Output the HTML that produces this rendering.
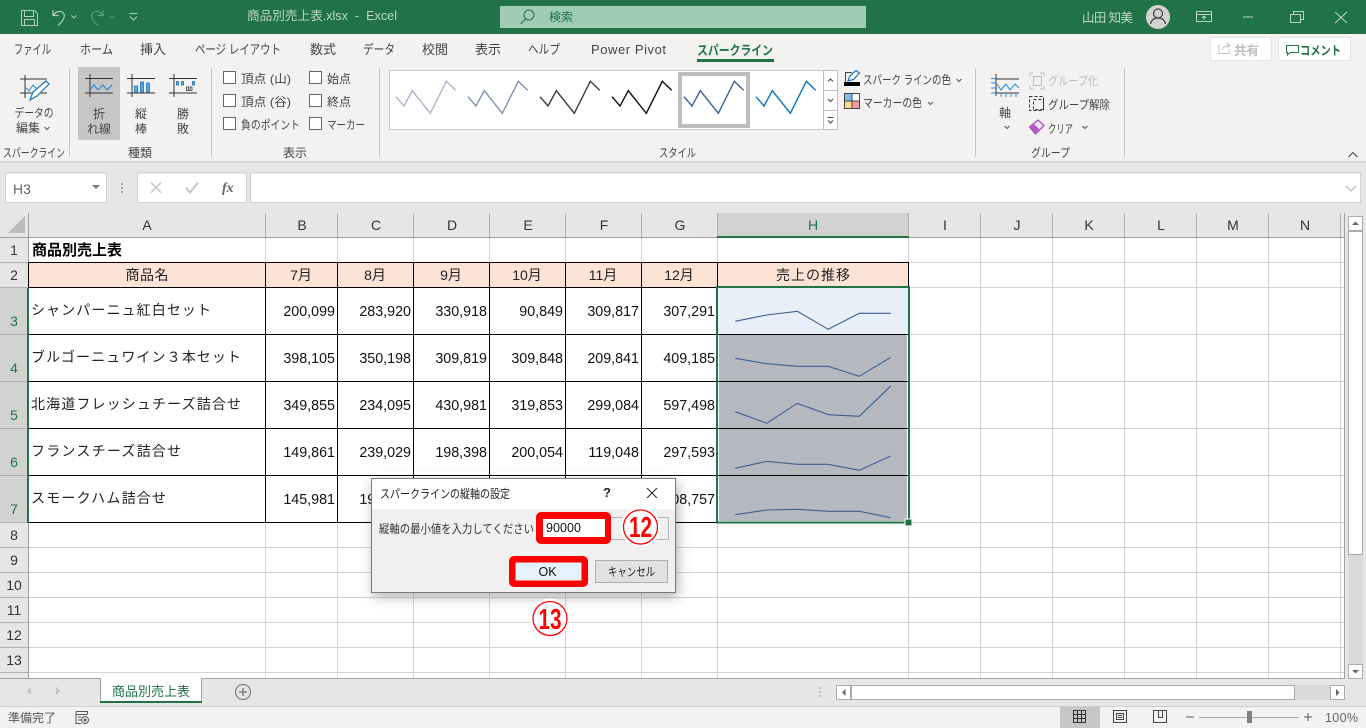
<!DOCTYPE html>
<html lang="ja"><head><meta charset="utf-8"><title>商品別売上表.xlsx - Excel</title>
<style>
html,body{margin:0;padding:0;background:#e6e6e6;overflow:hidden}
svg{display:block;font-family:"Liberation Sans","Noto Sans CJK JP",sans-serif}
.r{font-size:12px;fill:#444}
.c{font-size:14px;fill:#111}
.n{font-size:14.3px;fill:#111;text-anchor:end}
.h{font-size:14px;fill:#333;text-anchor:middle}
.hs{font-size:14px;fill:#217346;text-anchor:middle}
.m{text-anchor:middle}
</style></head><body>
<svg xmlns="http://www.w3.org/2000/svg" width="1366" height="728" viewBox="0 0 1366 728">
<!-- base -->
<rect width="1366" height="728" fill="#e6e6e6"/>
<!-- title bar -->
<rect width="1366" height="34" fill="#217346"/>
<g fill="none" stroke="#b3cfc0" stroke-width="1">
<path d="M21.5 10.5H34L37.5 13.5V25.5H21.5Z"/><path d="M24.5 10.5V16.5H33.5V10.5M24.5 25.5V19.5H34.5V25.5"/>
<path d="M53 10V15.5H58.5M53.5 15C56 11 62 10 64 14C65.5 18 62 22 58 25.5" stroke-width="1.2"/>
<path d="M71.5 15.5L74 18L76.5 15.5"/>
</g>
<g fill="none" stroke="#5d9a7b" stroke-width="1"><path d="M103 10V15.5H97.5M102.5 15C100 11 94 10 92 14C90.5 18 94 22 98 25.5" stroke-width="1.2"/><path d="M109.5 15.5L112 18L114.500 15.5"/></g>
<g fill="none" stroke="#b3cfc0"><path d="M129.5 13.5H137.5M130 16.5L133.5 20L137 16.5"/></g>
<text x="247" y="20" font-size="12.5" fill="#bcd5c8" textLength="150" lengthAdjust="spacingAndGlyphs">商品別売上表.xlsx&#160;&#160;-&#160;&#160;Excel</text>
<rect x="500" y="6" width="366" height="22" fill="#a0ccb3"/>
<g fill="none" stroke="#217346" stroke-width="1"><circle cx="529" cy="15" r="5"/><path d="M525.5 19L520.5 24"/></g>
<text x="549" y="21" font-size="12" fill="#217346">検索</text>
<text x="1082" y="22" font-size="12.5" fill="#bcd5c8" textLength="51" lengthAdjust="spacing">山田 知美</text>
<circle cx="1158" cy="17" r="12" fill="#d2d2d2"/>
<g fill="none" stroke="#444" stroke-width="1.2"><circle cx="1158" cy="13.5" r="4.5"/><path d="M1150.5 24C1151.5 19.5 1154.5 18 1158 18C1161.5 18 1164.5 19.5 1165.5 24"/></g>
<g fill="none" stroke="#b9d4c6" stroke-width="1">
<path d="M1196.5 11.5H1211.5V21.5H1196.5ZM1196.5 14.5H1211.5M1204 20V16M1202 18L1204 16L1206 18"/>
<path d="M1243 17H1253"/>
<path d="M1290.5 14.5H1300.5V22.5H1290.5ZM1293.5 14V11.5H1303.5V19.5H1301"/>
<path d="M1335 12L1347 23M1347 12L1335 23" stroke-width="1.1"/>
</g>
<!-- ribbon -->
<rect y="34" width="1366" height="127" fill="#f3f2f1"/>
<rect y="161" width="1366" height="1" fill="#d3d2d1"/><rect y="162" width="1366" height="1" fill="#dcdcdc"/><rect y="163" width="1366" height="1" fill="#e2e2e2"/>
<g font-size="13" fill="#444">
<text x="14" y="54" textLength="37" lengthAdjust="spacingAndGlyphs">ファイル</text>
<text x="80" y="54" textLength="33" lengthAdjust="spacingAndGlyphs">ホーム</text>
<text x="140" y="54" textLength="26" lengthAdjust="spacingAndGlyphs">挿入</text>
<text x="195" y="54" textLength="86" lengthAdjust="spacingAndGlyphs">ページ レイアウト</text>
<text x="310" y="54" textLength="26" lengthAdjust="spacingAndGlyphs">数式</text>
<text x="363" y="54" textLength="32" lengthAdjust="spacingAndGlyphs">データ</text>
<text x="422" y="54" textLength="26" lengthAdjust="spacingAndGlyphs">校閲</text>
<text x="475" y="54" textLength="26" lengthAdjust="spacingAndGlyphs">表示</text>
<text x="528" y="54" textLength="32" lengthAdjust="spacingAndGlyphs">ヘルプ</text>
<text x="591" y="54" textLength="75" lengthAdjust="spacing">Power Pivot</text>
<text x="697" y="55" textLength="76" lengthAdjust="spacingAndGlyphs" font-weight="700" fill="#217346">スパークライン</text>
</g>
<rect x="697" y="59" width="77" height="3" fill="#217346"/>
<!-- share buttons -->
<rect x="1210.5" y="37.5" width="61" height="23" fill="#fff" stroke="#e4e4e4"/>
<path d="M1219 44.5V53.5H1229V49M1222 50C1223 46.5 1226 45.5 1229 45.5M1226.5 43L1230 45.5L1226.500 48" fill="none" stroke="#c4c4c4"/>
<text x="1234" y="55" font-size="12.5" font-weight="700" fill="#bdbdbd">共有</text>
<rect x="1278.5" y="37.5" width="72" height="23" fill="#fff" stroke="#e4e4e4"/>
<path d="M1286.5 45.5H1298.5V52.5H1290L1287.5 55V52.500H1286.5Z" fill="none" stroke="#217346"/>
<text x="1300" y="55" font-size="12.5" font-weight="700" fill="#217346" textLength="41" lengthAdjust="spacingAndGlyphs">コメント</text>
<!-- group separators -->
<g fill="#c8c6c4"><rect x="69" y="68" width="1" height="89"/><rect x="211" y="68" width="1" height="89"/><rect x="379" y="68" width="1" height="89"/><rect x="975" y="68" width="1" height="89"/><rect x="1124" y="68" width="1" height="89"/></g>
<!-- edit data -->
<path d="M25 75V98M20 79H47M20 93H47" fill="none" stroke="#333"/>
<path d="M25 87L29 91L33 85L37 89" fill="none" stroke="#2b88d8"/>
<path d="M30 100L33 92L46 81L49 84L37 96Z" fill="#fff" stroke="#1a73c4" stroke-width="1.2"/>
<text class="r m" x="34" y="117" textLength="39" lengthAdjust="spacingAndGlyphs">データの</text>
<text class="r" x="16" y="132">編集</text><path d="M44.5 127L47 129.5L49.5 127" fill="none" stroke="#555"/>
<!-- type buttons -->
<rect x="78" y="67" width="42" height="73" fill="#c8c6c4"/>
<g fill="none" stroke="#333"><path d="M90 74V97M85 78.5H113M85 93H113M132 74V97M127 78.5H155M127 93H155M174 74V97M169 78.5H197M169 93H197"/></g>
<path d="M90 90L94 85L98 90L103 85L107 90L112 85" fill="none" stroke="#2b88d8" stroke-width="1.2"/>
<g fill="#5ba7de" stroke="#1a73c4" stroke-width=".8"><rect x="134.5" y="86" width="3" height="6"/><rect x="140.5" y="82" width="3" height="10"/><rect x="146.5" y="83" width="3" height="9"/></g>
<g fill="#5ba7de" stroke="#1a73c4" stroke-width=".8"><rect x="176.5" y="81.5" width="2" height="3.5"/><rect x="181.5" y="81.5" width="2" height="3.5"/><rect x="192.5" y="81.5" width="2" height="3.5"/></g>
<g fill="none" stroke="#333" stroke-width=".8"><rect x="186.5" y="87" width="2" height="3.5"/><rect x="190" y="87" width="2" height="3.5"/></g>
<g font-size="12" fill="#444" text-anchor="middle">
<text x="99" y="118">折</text><text x="99" y="133">れ線</text>
<text x="141" y="118">縦</text><text x="141" y="133">棒</text>
<text x="183" y="118">勝</text><text x="183" y="133">敗</text>
</g>
<!-- checkboxes -->
<g fill="#fff" stroke="#666"><rect x="223.5" y="71.5" width="12" height="12"/><rect x="223.5" y="94.5" width="12" height="12"/><rect x="223.5" y="117.5" width="12" height="12"/><rect x="309.5" y="71.5" width="12" height="12"/><rect x="309.5" y="94.5" width="12" height="12"/><rect x="309.5" y="117.5" width="12" height="12"/></g>
<text class="r" x="241" y="83" textLength="50" lengthAdjust="spacingAndGlyphs">頂点 (山)</text>
<text class="r" x="241" y="106" textLength="50" lengthAdjust="spacingAndGlyphs">頂点 (谷)</text>
<text class="r" x="241" y="129" textLength="59" lengthAdjust="spacingAndGlyphs">負のポイント</text>
<text class="r" x="327" y="83" textLength="24" lengthAdjust="spacingAndGlyphs">始点</text>
<text class="r" x="327" y="106" textLength="24" lengthAdjust="spacingAndGlyphs">終点</text>
<text class="r" x="327" y="129" textLength="38" lengthAdjust="spacingAndGlyphs">マーカー</text>
<!-- gallery -->
<rect x="389.5" y="70.5" width="434" height="59" fill="#fff" stroke="#c8c8c8"/>
<rect x="680" y="74" width="68" height="52" fill="#fff" stroke="#bdbdbd" stroke-width="4"/>
<g fill="none" stroke-width="1.4">
<path stroke="#abb8cb" d="M396 96.7L404 106L412.3 90.7L430.3 113.3L446.3 81.3L455.7 90.3"/>
<path stroke="#7f93b2" d="M468 96.7L476 106L484.3 90.7L502.3 113.3L518.3 81.3L527.7 90.3"/>
<path stroke="#3c3c3c" d="M540 96.7L548 106L556.3 90.7L574.3 113.3L590.3 81.3L599.7 90.3"/>
<path stroke="#111" d="M612 96.7L620 106L628.3 90.7L646.3 113.3L662.3 81.3L671.7 90.3"/>
<path stroke="#3a6296" d="M684 96.7L692 106L700.3 90.7L718.3 113.3L734.3 81.3L743.7 90.3"/>
<path stroke="#0a75c2" d="M756 96.7L764 106L772.3 90.7L790.3 113.3L806.3 81.3L815.7 90.3"/>
</g>
<g fill="#fff" stroke="#bdbdbd"><rect x="823.5" y="70.5" width="14" height="20"/><rect x="823.5" y="90.5" width="14" height="20"/><rect x="823.5" y="110.5" width="14" height="19"/></g>
<g fill="none" stroke="#444"><path d="M828 81.5L830.5 79L833 81.5M828 99L830.5 101.5L833 99M827.5 117.5H833.5M828 120.5L830.5 123L833 120.5"/></g>
<!-- sparkline colors -->
<path d="M845.5 83V72.5H852" fill="none" stroke="#444"/>
<path d="M848 81L850 76L856 70.5L859.5 73L853.5 79.5Z" fill="#fff" stroke="#1a73c4" stroke-width="1.2"/>
<rect x="844" y="82" width="16" height="4" fill="#000"/>
<rect x="844.5" y="93.5" width="15" height="15" fill="#fff" stroke="#444"/>
<rect x="845" y="94" width="7" height="7" fill="#7dbce8"/><rect x="845" y="101.5" width="7" height="6.5" fill="#fcd98a"/><rect x="852.5" y="101.5" width="6.5" height="6.5" fill="#fb9aa0"/>
<path d="M844.5 101H859.5M852 93.5V108.5" stroke="#444"/>
<text class="r" x="863" y="84" textLength="88" lengthAdjust="spacingAndGlyphs">スパーク ラインの色</text>
<path d="M956.5 79L959 81.5L961.5 79" fill="none" stroke="#555"/>
<text class="r" x="863" y="107" textLength="59" lengthAdjust="spacingAndGlyphs">マーカーの色</text>
<path d="M928 102L930.5 104.5L933 102" fill="none" stroke="#555"/>
<!-- axis -->
<path d="M996 74V96M996 79H1019M996 93H1019" fill="none" stroke="#333"/>
<path d="M991 78.5H996M991 83H996M991 88H996M991 93H996M1001 93V97M1006 93V97M1011 93V97M1016 93V97" stroke="#2b88d8" fill="none"/>
<path d="M997 84L1001 90L1006 84L1010 90L1015 84L1019 88" fill="none" stroke="#2b88d8"/>
<text class="r m" x="1005" y="117">軸</text>
<path d="M1004.5 126L1007 128.5L1009.5 126" fill="none" stroke="#555"/>
<g fill="none" stroke="#bbb"><path d="M1030 73H1033M1030 73V76M1040 73H1044M1044 73V76M1030 86V89H1033M1044 86V89H1040"/><rect x="1033.5" y="76.5" width="8" height="9"/></g>
<text x="1048" y="85" font-size="12" fill="#bbb" textLength="50" lengthAdjust="spacingAndGlyphs">グループ化</text>
<g fill="none" stroke="#333" stroke-dasharray="3 2"><rect x="1029.5" y="96.5" width="14" height="14"/></g>
<g fill="none" stroke="#333" stroke-dasharray="3 2"><rect x="1033.5" y="99.5" width="10" height="10"/></g>
<text class="r" x="1048" y="109" textLength="62" lengthAdjust="spacingAndGlyphs">グループ解除</text>
<path d="M1029.5 127L1038 120L1044 125.500L1035.500 134Z" fill="#f1e4f4" stroke="#a448b3" stroke-width="1.2"/>
<path d="M1029.5 127L1033.500 123.500L1039.500 129.500L1035.500 134Z" fill="#b45cc2"/>
<text class="r" x="1048" y="133" textLength="25" lengthAdjust="spacingAndGlyphs">クリア</text>
<path d="M1082.5 126L1085 128.5L1087.5 126" fill="none" stroke="#555"/>
<!-- group labels -->
<text class="r" x="3" y="157" textLength="62" lengthAdjust="spacingAndGlyphs">スパークライン</text>
<text class="r" x="128" y="157" textLength="24" lengthAdjust="spacingAndGlyphs">種類</text>
<text class="r" x="283" y="157" textLength="24" lengthAdjust="spacingAndGlyphs">表示</text>
<text class="r" x="659" y="157" textLength="37" lengthAdjust="spacingAndGlyphs">スタイル</text>
<text class="r" x="1031" y="157" textLength="39" lengthAdjust="spacingAndGlyphs">グループ</text>
<path d="M1348.5 157L1353 152.5L1357.5 157" fill="none" stroke="#444" stroke-width="1.1"/>
<!-- formula bar -->
<rect x="5.5" y="173" width="101" height="29.5" fill="#fff" stroke="#d0d0d0"/>
<text x="13" y="194" font-size="14" fill="#666">H3</text>
<path d="M92 185H100L96 189Z" fill="#777"/>
<path d="M122 183V185M122 187V189M122 191V193" stroke="#aaa" stroke-width="2"/>
<rect x="137.5" y="173" width="109" height="29.5" fill="#fff" stroke="#d0d0d0"/>
<path d="M151 182.5L161 192.5M161 182.5L151 192.5" stroke="#c4c4c4" stroke-width="1.5"/>
<path d="M186 188L190 192.5L198 182.5" stroke="#c4c4c4" stroke-width="2" fill="none"/>
<text x="222" y="192" font-size="14" font-style="italic" font-weight="700" font-family="Liberation Serif,serif" fill="#666">fx</text>
<rect x="250.5" y="173" width="1110" height="29.5" fill="#fff" stroke="#d0d0d0"/>
<path d="M1346 186L1351 191L1356 186" stroke="#aaa" fill="none"/>
<!-- sheet -->
<rect x="29" y="238" width="1315" height="440" fill="#fff"/>
<!-- headers -->
<rect x="0" y="213" width="1344" height="24" fill="#e6e6e6"/>
<rect x="0" y="237" width="28" height="441" fill="#e6e6e6"/>
<rect x="718" y="213" width="190" height="24" fill="#d2d2d2"/>
<rect x="0" y="288" width="28" height="234" fill="#d2d2d2"/>
<path d="M25 216V233H8Z" fill="#bbb"/>
<g stroke="#b1b1b1"><path d="M28.5 213V237M265.5 213V237M337.5 213V237M413.5 213V237M489.5 213V237M565.5 213V237M641.5 213V237M717.5 213V237M908.5 213V237M980.5 213V237M1052.5 213V237M1124.5 213V237M1196.5 213V237M1268.5 213V237M1340.5 213V237"/>
<path d="M0 262.5H28M0 287.5H28M0 334.5H28M0 381.5H28M0 428.5H28M0 475.5H28M0 522.5H28M0 547.5H28M0 572.5H28M0 597.5H28M0 622.5H28M0 647.5H28M0 672.5H28"/></g>
<rect x="0" y="237" width="1344" height="1" fill="#a0a0a0"/>
<rect x="28" y="213" width="1" height="465" fill="#a0a0a0"/>
<rect x="717" y="236" width="192" height="2" fill="#217346"/>
<rect x="1344" y="213" width="1" height="465" fill="#a0a0a0"/>
<!-- gridlines -->
<g stroke="#d4d4d4"><path d="M265.5 238V678M337.5 238V678M413.5 238V678M489.5 238V678M565.5 238V678M641.5 238V678M717.5 238V678M908.5 238V678M980.5 238V678M1052.5 238V678M1124.5 238V678M1196.5 238V678M1268.5 238V678M1340.5 238V678"/>
<path d="M29 262.5H1344M29 287.5H1344M908 334.5H1344M908 381.5H1344M908 428.5H1344M908 475.5H1344M908 522.5H1344M29 547.5H1344M29 572.5H1344M29 597.5H1344M29 622.5H1344M29 647.5H1344M29 672.5H1344"/></g>
<rect x="29" y="263" width="880" height="24" fill="#fde3d6"/>
<!-- sparkline cells -->
<rect x="718" y="288" width="190" height="46" fill="#e8eff9"/>
<rect x="718" y="335" width="191" height="187" fill="#fff"/>
<rect x="719" y="335" width="188" height="186" fill="#b5b9bf"/>
<!-- table borders -->
<g stroke="#000"><path d="M29 262.5H909M29 287.5H909M29 334.5H909M29 381.5H909M29 428.5H909M29 475.5H909M29 522.5H909"/>
<path d="M265.5 262V523M337.5 262V523M413.5 262V523M489.5 262V523M565.5 262V523M641.5 262V523M717.5 262V523M908.5 262V523M28.5 262V288"/></g>
<!-- sparklines -->
<g fill="none" stroke="#3a5f91" stroke-width="1.1">
<path d="M735.3 321.3L766.7 315L797.3 311.3L828.3 329.3L859.3 313.3L890.7 313.3"/>
<path d="M735.3 358.3L766.7 363.7L797.3 366.3L828.3 366.3L859.3 376.3L890.7 357.3"/>
<path d="M735.3 411.7L766.7 423.3L797.3 403.3L828.3 414.7L859.3 416.3L890.7 386"/>
<path d="M735.3 468.3L766.7 461.3L797.3 464.3L828.3 464.3L859.3 470.3L890.7 456"/>
<path d="M735.3 514.7L766.7 510L797.3 509.3L828.3 511.3L859.3 511.3L890.7 517.7"/>
</g>
<!-- selection -->
<rect x="717" y="287" width="192" height="235.5" fill="none" stroke="#217346" stroke-width="2"/>
<rect x="27" y="288" width="2" height="235" fill="#217346"/>
<rect x="905" y="519" width="7" height="7" fill="#217346" stroke="#fff"/>
<!-- header text -->
<text class="h" x="147" y="230">A</text><text class="h" x="302" y="230">B</text><text class="h" x="376" y="230">C</text><text class="h" x="452" y="230">D</text><text class="h" x="528" y="230">E</text><text class="h" x="604" y="230">F</text><text class="h" x="680" y="230">G</text><text class="hs" x="813" y="230">H</text><text class="h" x="945" y="230">I</text><text class="h" x="1017" y="230">J</text><text class="h" x="1089" y="230">K</text><text class="h" x="1161" y="230">L</text><text class="h" x="1233" y="230">M</text><text class="h" x="1305" y="230">N</text>
<text class="h" x="14" y="255">1</text><text class="h" x="14" y="280">2</text><text class="hs" x="14" y="326">3</text><text class="hs" x="14" y="373">4</text><text class="hs" x="14" y="420">5</text><text class="hs" x="14" y="467">6</text><text class="hs" x="14" y="514">7</text><text class="h" x="14" y="540">8</text><text class="h" x="14" y="565">9</text><text class="h" x="14" y="590">10</text><text class="h" x="14" y="615">11</text><text class="h" x="14" y="640">12</text><text class="h" x="14" y="665">13</text>
<!-- cell text -->
<text x="32" y="255" font-size="15" font-weight="700" fill="#000" textLength="90" lengthAdjust="spacingAndGlyphs">商品別売上表</text>
<g text-anchor="middle" font-size="14" fill="#222">
<text x="147" y="280" textLength="43">商品名</text><text x="301" y="280">7月</text><text x="375" y="280">8月</text><text x="451" y="280">9月</text><text x="527" y="280">10月</text><text x="603" y="280">11月</text><text x="679" y="280">12月</text><text x="813" y="280" textLength="74">売上の推移</text>
</g>
<g font-size="14" fill="#222">
<text x="31" y="315" textLength="180" lengthAdjust="spacing">シャンパーニュ紅白セット</text>
<text x="31" y="362" textLength="210" lengthAdjust="spacing">ブルゴーニュワイン３本セット</text>
<text x="31" y="409" textLength="210" lengthAdjust="spacing">北海道フレッシュチーズ詰合せ</text>
<text x="31" y="456" textLength="150" lengthAdjust="spacing">フランスチーズ詰合せ</text>
<text x="31" y="503" textLength="135" lengthAdjust="spacing">スモークハム詰合せ</text>
</g>
<g>
<text class="n" x="335" y="316">200,099</text><text class="n" x="411" y="316">283,920</text><text class="n" x="487" y="316">330,918</text><text class="n" x="563" y="316">90,849</text><text class="n" x="639" y="316">309,817</text><text class="n" x="715" y="316">307,291</text>
<text class="n" x="335" y="363">398,105</text><text class="n" x="411" y="363">350,198</text><text class="n" x="487" y="363">309,819</text><text class="n" x="563" y="363">309,848</text><text class="n" x="639" y="363">209,841</text><text class="n" x="715" y="363">409,185</text>
<text class="n" x="335" y="410">349,855</text><text class="n" x="411" y="410">234,095</text><text class="n" x="487" y="410">430,981</text><text class="n" x="563" y="410">319,853</text><text class="n" x="639" y="410">299,084</text><text class="n" x="715" y="410">597,498</text>
<text class="n" x="335" y="457">149,861</text><text class="n" x="411" y="457">239,029</text><text class="n" x="487" y="457">198,398</text><text class="n" x="563" y="457">200,054</text><text class="n" x="639" y="457">119,048</text><text class="n" x="715" y="457">297,593</text>
<text class="n" x="335" y="504">145,981</text><text class="n" x="411" y="504">198,309</text><text class="n" x="715" y="504">308,757</text>
</g>
<!-- vertical scrollbar -->
<rect x="1345" y="213" width="21" height="493" fill="#e6e6e6"/>
<rect x="1348" y="232" width="15" height="432" fill="#dadada"/>
<rect x="1348.5" y="216.5" width="14" height="14" fill="#fff" stroke="#ababab"/>
<path d="M1352 225L1355.5 221.5L1359 225Z" fill="#666"/>
<rect x="1348.5" y="231.5" width="14" height="323" fill="#fff" stroke="#ababab"/>
<rect x="1348.5" y="664.5" width="14" height="14" fill="#fff" stroke="#ababab"/>
<path d="M1352 670H1359L1355.5 673.5Z" fill="#666"/>
<!-- tab bar -->
<rect x="0" y="678" width="1345" height="28" fill="#e6e6e6"/>
<rect x="0" y="678" width="1345" height="1" fill="#a0a0a0"/>
<path d="M31 686.5V695.5L27 691ZM56 686.5V695.5L60 691Z" fill="#c6c6c6"/>
<rect x="100" y="678" width="101" height="25" fill="#fff"/>
<path d="M100.5 678V702M201.5 678V702" stroke="#a0a0a0"/>
<rect x="100" y="701" width="102" height="2" fill="#217346"/>
<text x="112" y="696" font-size="13" fill="#217346" textLength="78" lengthAdjust="spacing">商品別売上表</text>
<circle cx="243" cy="692" r="7.5" fill="none" stroke="#808080" stroke-width="1.2"/>
<path d="M239 692H247M243 688V696" stroke="#808080" stroke-width="1.6"/>
<path d="M820 687V689M820 691V693M820 695V697" stroke="#999"/>
<!-- horizontal scrollbar -->
<rect x="836" y="685" width="495" height="15" fill="#dadada"/>
<rect x="836.5" y="685.5" width="14" height="14" fill="#fff" stroke="#ababab"/>
<path d="M845.5 689V696L842 692.5Z" fill="#666"/>
<rect x="851.5" y="685.5" width="443" height="14" fill="#fff" stroke="#ababab"/>
<rect x="1330.5" y="685.5" width="14" height="14" fill="#fff" stroke="#ababab"/>
<path d="M1336 689V696L1339.5 692.5Z" fill="#666"/>
<!-- status bar -->
<rect y="706" width="1366" height="22" fill="#f3f2f1"/>
<rect y="706" width="1366" height="1" fill="#cfcfcf"/>
<text x="8" y="722" font-size="12" fill="#555" textLength="48">準備完了</text>
<path d="M76 711.5H87.5V714M76 711.5V723.5H81M76 714.5H87.5M78 717H81M78 720H81" fill="none" stroke="#555"/>
<circle cx="85" cy="720" r="3.5" fill="none" stroke="#555"/><circle cx="85" cy="720" r="1.5" fill="#555"/>
<rect x="1060" y="707" width="40" height="21" fill="#c6c6c6"/>
<path d="M1073.5 710.5H1085.5V722.5H1073.5ZM1073.5 714.5H1085.5M1073.5 718.5H1085.5M1077.5 710.5V722.5M1081.5 710.5V722.5" fill="none" stroke="#333"/>
<path d="M1113.5 710.5H1126.5V722.5H1113.5ZM1116.5 713.5H1123.5V719.5H1116.5ZM1118 715.5H1122M1118 717.5H1122" fill="none" stroke="#444"/>
<path d="M1153.5 710.5H1166.5V722.5H1153.5ZM1158.5 710.5V717.5H1162.5V710.5" fill="none" stroke="#444"/>
<path d="M1186 717H1194M1304 717H1312M1308 713V721" stroke="#555" fill="none"/>
<rect x="1199" y="717" width="100" height="1" fill="#aaa"/>
<rect x="1247" y="711" width="5" height="12" fill="#808080"/>
<text x="1325" y="722" font-size="12.5" fill="#666" textLength="33">100%</text>
<!-- dialog -->
<defs><filter id="sh" x="-10%" y="-15%" width="120%" height="135%"><feDropShadow dx="2" dy="4" stdDeviation="6" flood-color="#000" flood-opacity=".3"/></filter></defs>
<rect x="371.5" y="478.5" width="304" height="114" fill="#f0f0f0" stroke="#7a7a7a" filter="url(#sh)"/>
<rect x="372" y="479" width="303" height="30" fill="#fff"/>
<text x="380" y="498" font-size="12" fill="#222" textLength="130" lengthAdjust="spacingAndGlyphs">スパークラインの縦軸の設定</text>
<text x="607" y="497" font-size="13" font-weight="700" fill="#222" text-anchor="middle">?</text>
<path d="M647 488L657 498M657 488L647 498" stroke="#222" fill="none"/>
<text x="379" y="533" font-size="12" fill="#333" textLength="155" lengthAdjust="spacingAndGlyphs">縦軸の最小値を入力してください</text>
<rect x="610" y="517.5" width="58.5" height="22" fill="#f0f0f0" stroke="#b5b5b5"/>
<rect x="536" y="512" width="75" height="32" rx="5" fill="#f00"/>
<rect x="543" y="519" width="62" height="18" fill="#fff"/>
<text x="546" y="532" font-size="12.5" fill="#111" textLength="35">90000</text>
<circle cx="640.5" cy="527" r="20" fill="#fff"/>
<circle cx="640.5" cy="527" r="17" fill="#fff" stroke="#f00" stroke-width="1.3"/>
<text x="640.5" y="537" font-size="29" font-weight="700" fill="#f00" text-anchor="middle" textLength="23" lengthAdjust="spacingAndGlyphs">12</text>
<rect x="509" y="556" width="79" height="31" rx="5" fill="#f00"/>
<rect x="515.5" y="562.5" width="66" height="18" fill="#e5f1fb"/>
<text x="547.5" y="576" font-size="12.5" fill="#111" text-anchor="middle">OK</text>
<rect x="595.5" y="560.5" width="72" height="22" fill="#e1e1e1" stroke="#adadad"/>
<text x="631.5" y="576" font-size="12" fill="#222" text-anchor="middle" textLength="47" lengthAdjust="spacingAndGlyphs">キャンセル</text>
<circle cx="550" cy="618.5" r="20" fill="#fff"/>
<circle cx="550" cy="618.5" r="17" fill="#fff" stroke="#f00" stroke-width="1.3"/>
<text x="550" y="629" font-size="29" font-weight="700" fill="#f00" text-anchor="middle" textLength="23" lengthAdjust="spacingAndGlyphs">13</text>
</svg>
</body></html>
